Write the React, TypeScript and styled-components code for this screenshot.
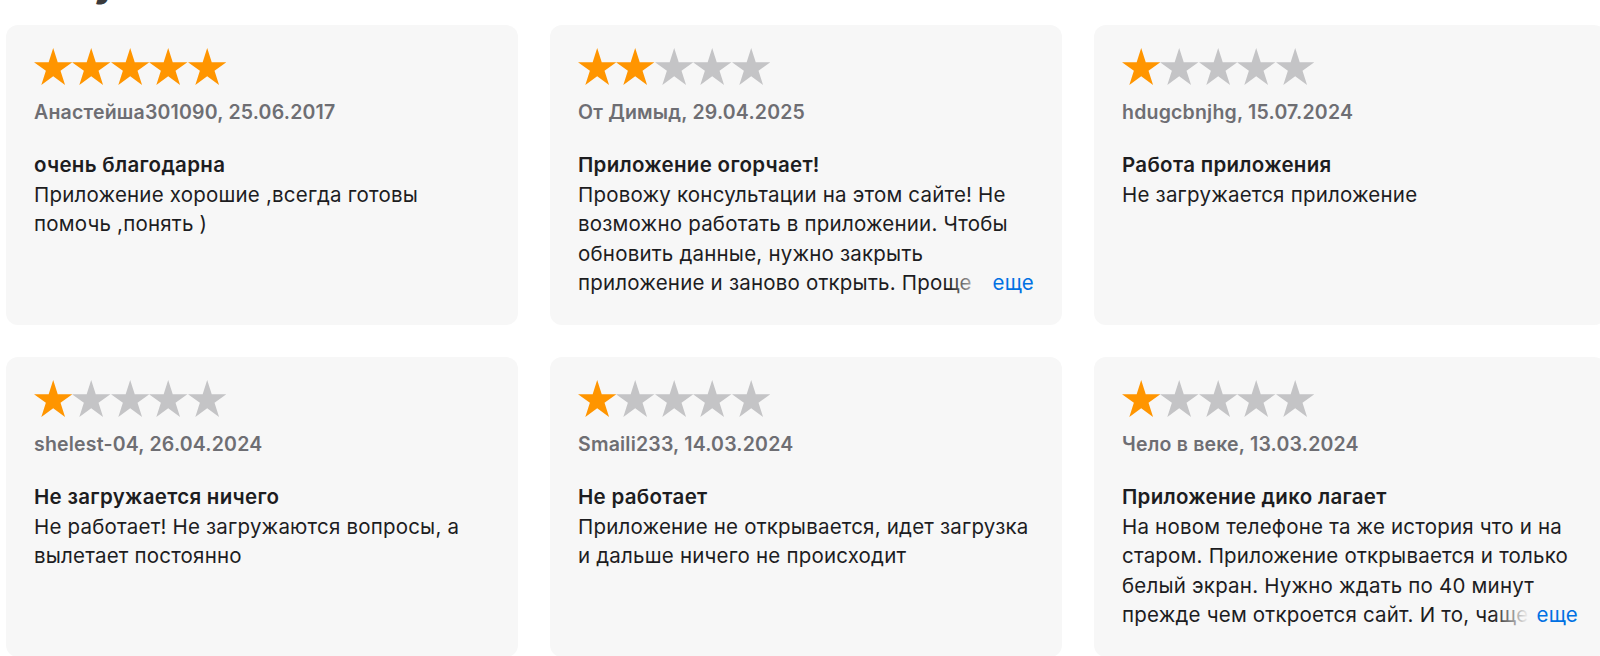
import React from "react"
import styled, { createGlobalStyle } from "styled-components"

const GlobalStyle = createGlobalStyle`
  html, body {
    margin: 0;
    padding: 0;
    background: #ffffff;
    overflow: hidden;
  }
  body {
    font-family: Inter, "Noto Sans", "Liberation Sans", sans-serif;
    -webkit-font-smoothing: antialiased;
  }
`

const CARD_BG = "#f7f7f7"
const LINE = 29.6

const Page = styled.div`
  width: 1600px;
  height: 656px;
  padding-left: 6px;
  box-sizing: border-box;
  overflow: hidden;
`

// only the descender of the section title peeks in at the top
const HeadingStrip = styled.div`
  height: 25px;
  overflow: hidden;
  display: flex;
  align-items: flex-end;
`

const Heading = styled.h2`
  margin: 0 0 23px 58px;
  font-size: 40px;
  line-height: 40px;
  font-weight: 700;
  color: #3a3a3c;
  letter-spacing: -0.5px;
  white-space: nowrap;
`

const Grid = styled.div`
  display: grid;
  grid-template-columns: repeat(3, 512px);
  grid-auto-rows: 300px;
  column-gap: 32px;
  row-gap: 32px;
`

const Card = styled.article`
  background: ${CARD_BG};
  border-radius: 12px;
  padding: 23px 28px 0;
  box-sizing: border-box;
  display: flex;
  flex-direction: column;
  min-width: 0;
`

const Stars = styled.div`
  display: flex;
  height: 37px;
`

const Author = styled.div`
  margin-top: 14px;
  font-size: 19.5px;
  line-height: 26px;
  font-weight: 600;
  color: #6e6e73;
  letter-spacing: 0.2px;
  white-space: nowrap;
`

const Title = styled.h3`
  margin: 25px 0 0;
  font-size: 20.5px;
  line-height: ${LINE}px;
  font-weight: 600;
  color: #1d1d1f;
  letter-spacing: 0.3px;
`

const BodyWrap = styled.div`
  position: relative;
  width: 456px;
`

const Body = styled.p`
  margin: 0;
  font-size: 20.5px;
  line-height: ${LINE}px;
  font-weight: 400;
  color: #1d1d1f;
  letter-spacing: 0.2px;
  max-height: ${LINE * 4}px;
  overflow: hidden;
`

const More = styled.button`
  position: absolute;
  right: 0;
  bottom: 0;
  border: 0;
  margin: 0;
  padding: 0 0 0 44px;
  background: linear-gradient(
    to right,
    rgba(247, 247, 247, 0),
    ${CARD_BG} 36px
  );
  font-family: inherit;
  font-size: 20.5px;
  line-height: ${LINE}px;
  letter-spacing: 0.2px;
  color: #0071e3;
  cursor: pointer;
`

type Review = {
  rating: number
  author: string
  title: string
  text: string
  truncated?: boolean
}

const reviews: Review[] = [
  {
    rating: 5,
    author: "Анастейша301090, 25.06.2017",
    title: "очень благодарна",
    text: "Приложение хорошие ,всегда готовы помочь ,понять )",
  },
  {
    rating: 2,
    author: "От Димыд, 29.04.2025",
    title: "Приложение огорчает!",
    text: "Провожу консультации на этом сайте! Не возможно работать в приложении. Чтобы обновить данные, нужно закрыть приложение и заново открыть. Проще использовать сайт в браузере, там всё работает быстрее.",
    truncated: true,
  },
  {
    rating: 1,
    author: "hdugcbnjhg, 15.07.2024",
    title: "Работа приложения",
    text: "Не загружается приложение",
  },
  {
    rating: 1,
    author: "shelest-04, 26.04.2024",
    title: "Не загружается ничего",
    text: "Не работает! Не загружаются вопросы, а вылетает постоянно",
  },
  {
    rating: 1,
    author: "Smaili233, 14.03.2024",
    title: "Не работает",
    text: "Приложение не открывается, идет загрузка и дальше ничего не происходит",
  },
  {
    rating: 1,
    author: "Чело в веке, 13.03.2024",
    title: "Приложение дико лагает",
    text: "На новом телефоне та же история что и на старом. Приложение открывается и только белый экран. Нужно ждать по 40 минут прежде чем откроется сайт. И то, чаще приходится перезапускать телефон целиком.",
    truncated: true,
  },
]

const STAR_POINTS =
  "50,0 61.23,34.55 97.55,34.55 68.16,55.9 79.39,90.45 50,69.1 20.61,90.45 31.84,55.9 2.45,34.55 38.77,34.55"

const Star = ({ filled }: { filled: boolean }) => (
  <svg
    width="38.4"
    height="37"
    viewBox="2.45 0 95.1 90.45"
    preserveAspectRatio="none"
    aria-hidden
  >
    <polygon points={STAR_POINTS} fill={filled ? "#ff9500" : "#c4c4c6"} />
  </svg>
)

const Rating = ({ value }: { value: number }) => (
  <Stars aria-label={`${value} из 5`}>
    {[1, 2, 3, 4, 5].map((i) => (
      <Star key={i} filled={i <= value} />
    ))}
  </Stars>
)

const ReviewCard = ({ review }: { review: Review }) => (
  <Card>
    <Rating value={review.rating} />
    <Author>{review.author}</Author>
    <Title>{review.title}</Title>
    <BodyWrap>
      <Body>{review.text}</Body>
      {review.truncated && <More>еще</More>}
    </BodyWrap>
  </Card>
)

export default function App() {
  return (
    <>
      <GlobalStyle />
      <Page>
        <HeadingStrip>
          <Heading>Публичные отзывы</Heading>
        </HeadingStrip>
        <Grid>
          {reviews.map((r) => (
            <ReviewCard key={r.author} review={r} />
          ))}
        </Grid>
      </Page>
    </>
  )
}
